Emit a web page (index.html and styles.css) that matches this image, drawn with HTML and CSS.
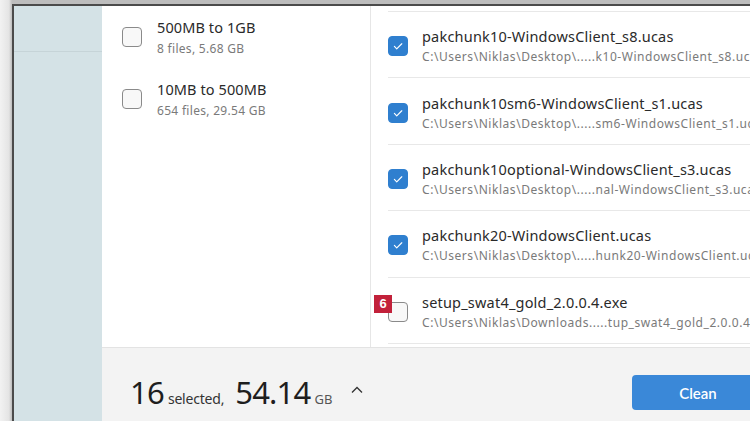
FILE: index.html
```html
<!DOCTYPE html>
<html>
<head>
<meta charset="utf-8">
<link rel="stylesheet" href="styles.css">
</head>
<body>
<div class="window">
  <aside class="sidebar"><div class="sidebar-line"></div></aside>
  <div class="content">
    <div class="panes">
      <section class="groups">
        <div class="group">
          <span class="box"></span>
          <div class="gtext">
            <div class="gtitle">500MB to 1GB</div>
            <div class="gsub">8 files, 5.68 GB</div>
          </div>
        </div>
        <div class="group">
          <span class="box"></span>
          <div class="gtext">
            <div class="gtitle">10MB to 500MB</div>
            <div class="gsub">654 files, 29.54 GB</div>
          </div>
        </div>
      </section>
      <section class="files">
        <div class="file-spacer"></div>
        <div class="file">
          <span class="box checked"><svg viewBox="0 0 20 20"><path d="M6 10.5l2.6 2.6L14.2 7.5"/></svg></span>
          <div class="ftext">
            <div class="fname">pakchunk10-WindowsClient_s8.ucas</div>
            <div class="fpath">C:\Users\Niklas\Desktop\.....k10-WindowsClient_s8.ucas</div>
          </div>
        </div>
        <div class="file">
          <span class="box checked"><svg viewBox="0 0 20 20"><path d="M6 10.5l2.6 2.6L14.2 7.5"/></svg></span>
          <div class="ftext">
            <div class="fname">pakchunk10sm6-WindowsClient_s1.ucas</div>
            <div class="fpath">C:\Users\Niklas\Desktop\.....sm6-WindowsClient_s1.ucas</div>
          </div>
        </div>
        <div class="file">
          <span class="box checked"><svg viewBox="0 0 20 20"><path d="M6 10.5l2.6 2.6L14.2 7.5"/></svg></span>
          <div class="ftext">
            <div class="fname">pakchunk10optional-WindowsClient_s3.ucas</div>
            <div class="fpath">C:\Users\Niklas\Desktop\.....nal-WindowsClient_s3.ucas</div>
          </div>
        </div>
        <div class="file">
          <span class="box checked"><svg viewBox="0 0 20 20"><path d="M6 10.5l2.6 2.6L14.2 7.5"/></svg></span>
          <div class="ftext">
            <div class="fname">pakchunk20-WindowsClient.ucas</div>
            <div class="fpath">C:\Users\Niklas\Desktop\.....hunk20-WindowsClient.ucas</div>
          </div>
        </div>
        <div class="file">
          <span class="box badge-host"><span class="badge">6</span></span>
          <div class="ftext">
            <div class="fname">setup_swat4_gold_2.0.0.4.exe</div>
            <div class="fpath">C:\Users\Niklas\Downloads.....tup_swat4_gold_2.0.0.4.exe</div>
          </div>
        </div>
      </section>
    </div>
    <footer class="footer">
      <div class="summary">
        <span class="big">16</span><span class="small">selected,</span>
        <span class="big num2">54.14</span><span class="unit">GB</span>
        <svg class="chev" viewBox="0 0 14 10"><path d="M2 7.5L7 2.5l5 5"/></svg>
      </div>
      <button class="clean">Clean</button>
    </footer>
  </div>
</div>
</body>
</html>
```

FILE: styles.css
```css
html, body {
  margin: 0;
  padding: 0;
  height: 100%;
  overflow: hidden;
}
body {
  background: linear-gradient(90deg, #f2f2f2 0, #e4e4e4 9px, #bdbdbd 12px);
  font-family: "Noto Sans", "Open Sans", sans-serif;
  color: #222;
}
.window {
  margin: 4px 0 0 12px;
  width: 800px;
  height: 430px;
  border-top: 2px solid #4b4b4b;
  border-left: 2px solid #4b4b4b;
  display: flex;
  box-sizing: border-box;
  background: #fff;
}
.sidebar {
  width: 88px;
  flex: none;
  background: #d4e2e6;
}
.sidebar-line {
  margin-top: 45px;
  height: 1px;
  background: #c6d4d8;
}
.content {
  flex: 1;
  display: flex;
  flex-direction: column;
}
.panes {
  height: 341px;
  display: flex;
  flex: none;
  background: #fff;
}
.groups {
  width: 269px;
  flex: none;
  border-right: 1px solid #e6e6e6;
  padding: 0 0 0 20px;
  box-sizing: border-box;
}
.group {
  display: flex;
  align-items: center;
  height: 62px;
}
.group .box {
  margin-right: 15px;
}
.gtext {
  display: flex;
  flex-direction: column;
}
.gtitle {
  font-size: 14.5px;
  line-height: 20px;
  color: #2a2a2a;
  letter-spacing: 0.1px;
}
.gsub {
  font-size: 12px;
  line-height: 16px;
  color: #7a7a7a;
  margin-top: 4px;
  letter-spacing: 0.3px;
}
.box {
  width: 18px;
  height: 18px;
  border: 1px solid #8a8a8a;
  border-radius: 4px;
  background: #f8f8f8;
  flex: none;
  display: flex;
  align-items: center;
  justify-content: center;
}
.box.checked {
  background: #2f7fcf;
  border-color: #2f7fcf;
}
.box svg {
  width: 18px;
  height: 18px;
}
.box svg path {
  fill: none;
  stroke: #fff;
  stroke-width: 1.3;
  stroke-linecap: round;
  stroke-linejoin: round;
}
.files {
  flex: 1;
  padding-left: 17px;
  overflow: hidden;
}
.file-spacer {
  height: 5px;
  border-bottom: 1px solid #e8e8e8;
}
.file {
  display: flex;
  align-items: center;
  height: 65.4px;
  border-bottom: 1px solid #e8e8e8;
  white-space: nowrap;
}
.file .box {
  margin-right: 14px;
  margin-top: 3px;
}
.badge-host {
  position: relative;
}
.badge {
  position: absolute;
  left: -15px;
  top: -8px;
  width: 18px;
  height: 18px;
  background: #c2213a;
  color: #fff;
  font-weight: 700;
  font-size: 13px;
  line-height: 18px;
  text-align: center;
  font-family: "Liberation Sans", sans-serif;
}
.ftext {
  display: flex;
  flex-direction: column;
  margin-top: 2px;
}
.fname {
  font-size: 14.5px;
  line-height: 20px;
  color: #2a2a2a;
  letter-spacing: 0.2px;
}
.fpath {
  font-size: 12px;
  line-height: 16px;
  color: #7a7a7a;
  margin-top: 3px;
  letter-spacing: 0.55px;
}
.footer {
  flex: 1;
  background: #f3f3f3;
  border-top: 1px solid #e3e3e3;
  display: flex;
  align-items: flex-start;
  justify-content: space-between;
  padding: 0 48px 0 28px;
}
.summary {
  display: flex;
  align-items: baseline;
  margin-top: 24px;
}
.big {
  font-size: 31px;
  line-height: 40px;
  color: #1e1e1e;
  letter-spacing: -0.8px;
}
.small {
  font-size: 14px;
  color: #333;
  margin-left: 4px;
  letter-spacing: -0.2px;
}
.num2 {
  margin-left: 11px;
}
.unit {
  font-size: 13px;
  color: #555;
  margin-left: 4px;
}
.chev {
  width: 14px;
  height: 10px;
  margin-left: 18px;
  align-self: center;
  margin-top: -4px;
}
.chev path {
  fill: none;
  stroke: #333;
  stroke-width: 1.3;
}
.clean {
  margin-top: 27px;
  width: 132px;
  height: 35px;
  border: none;
  border-radius: 4px;
  background: #3a88d8;
  color: #fff;
  font-family: "Lato", "Noto Sans", sans-serif;
  font-size: 15px;
  font-weight: 600;
}
```
